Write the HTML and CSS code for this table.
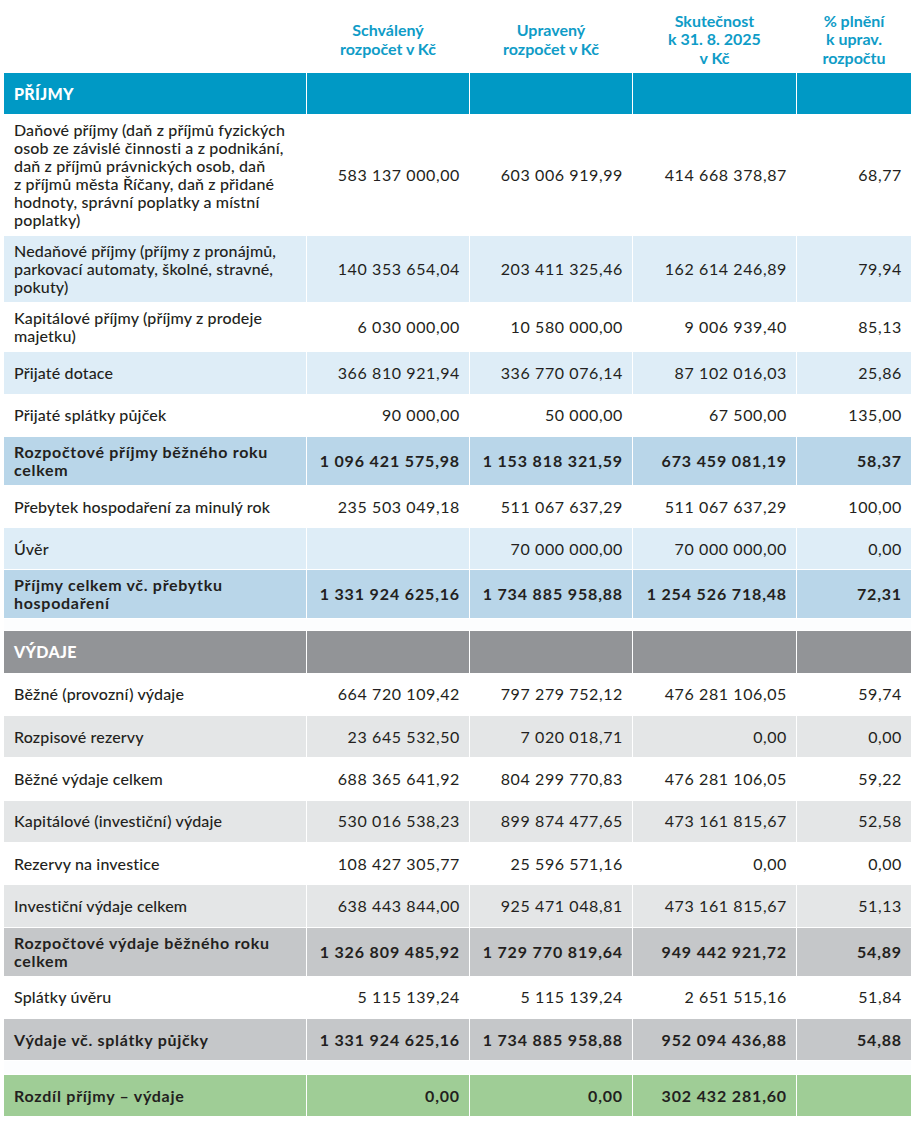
FILE: index.html
```html
<!DOCTYPE html>
<html lang="cs">
<head>
<meta charset="utf-8">
<title>Rozpočet</title>
<link rel="stylesheet" href="styles.css">
</head>
<body>
<table class="budget">
  <thead>
    <tr class="head">
      <th class="c-label"></th>
      <th class="c-num">Schválený<br>rozpočet v Kč</th>
      <th class="c-num">Upravený<br>rozpočet v Kč</th>
      <th class="c-num3">Skutečnost<br>k 31. 8. 2025<br>v Kč</th>
      <th class="c-pct">% plnění<br>k uprav.<br>rozpočtu</th>
    </tr>
  </thead>
  <tbody>
    <tr class="sec sec-in"><td>PŘÍJMY</td><td></td><td></td><td></td><td></td></tr>
    <tr class="w"><td>Daňové příjmy (daň z příjmů fyzických<br>osob ze závislé činnosti a z podnikání,<br>daň z příjmů právnických osob, daň<br>z příjmů města Říčany, daň z přidané<br>hodnoty, správní poplatky a místní<br>poplatky)</td><td>583 137 000,00</td><td>603 006 919,99</td><td>414 668 378,87</td><td>68,77</td></tr>
    <tr class="lb"><td>Nedaňové příjmy (příjmy z pronájmů,<br>parkovací automaty, školné, stravné,<br>pokuty)</td><td>140 353 654,04</td><td>203 411 325,46</td><td>162 614 246,89</td><td>79,94</td></tr>
    <tr class="w"><td>Kapitálové příjmy (příjmy z prodeje<br>majetku)</td><td>6 030 000,00</td><td>10 580 000,00</td><td>9 006 939,40</td><td>85,13</td></tr>
    <tr class="lb"><td>Přijaté dotace</td><td>366 810 921,94</td><td>336 770 076,14</td><td>87 102 016,03</td><td>25,86</td></tr>
    <tr class="w"><td>Přijaté splátky půjček</td><td>90 000,00</td><td>50 000,00</td><td>67 500,00</td><td>135,00</td></tr>
    <tr class="mb tot"><td>Rozpočtové příjmy běžného roku<br>celkem</td><td>1 096 421 575,98</td><td>1 153 818 321,59</td><td>673 459 081,19</td><td>58,37</td></tr>
    <tr class="w"><td>Přebytek hospodaření za minulý rok</td><td>235 503 049,18</td><td>511 067 637,29</td><td>511 067 637,29</td><td>100,00</td></tr>
    <tr class="lb"><td>Úvěr</td><td></td><td>70 000 000,00</td><td>70 000 000,00</td><td>0,00</td></tr>
    <tr class="mb tot"><td>Příjmy celkem vč. přebytku<br>hospodaření</td><td>1 331 924 625,16</td><td>1 734 885 958,88</td><td>1 254 526 718,48</td><td>72,31</td></tr>
    <tr class="gap"><td colspan="5"></td></tr>
    <tr class="sec sec-out"><td>VÝDAJE</td><td></td><td></td><td></td><td></td></tr>
    <tr class="w"><td>Běžné (provozní) výdaje</td><td>664 720 109,42</td><td>797 279 752,12</td><td>476 281 106,05</td><td>59,74</td></tr>
    <tr class="lg"><td>Rozpisové rezervy</td><td>23 645 532,50</td><td>7 020 018,71</td><td>0,00</td><td>0,00</td></tr>
    <tr class="w"><td>Běžné výdaje celkem</td><td>688 365 641,92</td><td>804 299 770,83</td><td>476 281 106,05</td><td>59,22</td></tr>
    <tr class="lg"><td>Kapitálové (investiční) výdaje</td><td>530 016 538,23</td><td>899 874 477,65</td><td>473 161 815,67</td><td>52,58</td></tr>
    <tr class="w"><td>Rezervy na investice</td><td>108 427 305,77</td><td>25 596 571,16</td><td>0,00</td><td>0,00</td></tr>
    <tr class="lg"><td>Investiční výdaje celkem</td><td>638 443 844,00</td><td>925 471 048,81</td><td>473 161 815,67</td><td>51,13</td></tr>
    <tr class="mg tot"><td>Rozpočtové výdaje běžného roku<br>celkem</td><td>1 326 809 485,92</td><td>1 729 770 819,64</td><td>949 442 921,72</td><td>54,89</td></tr>
    <tr class="w"><td>Splátky úvěru</td><td>5 115 139,24</td><td>5 115 139,24</td><td>2 651 515,16</td><td>51,84</td></tr>
    <tr class="mg tot"><td>Výdaje vč. splátky půjčky</td><td>1 331 924 625,16</td><td>1 734 885 958,88</td><td>952 094 436,88</td><td>54,88</td></tr>
    <tr class="gap gap2"><td colspan="5"></td></tr>
    <tr class="gr tot"><td>Rozdíl příjmy – výdaje</td><td>0,00</td><td>0,00</td><td>302 432 281,60</td><td></td></tr>
  </tbody>
</table>
</body>
</html>
```

FILE: styles.css
```css
html, body {
  margin: 0;
  padding: 0;
  background: #ffffff;
}

body {
  font-family: Lato, "Noto Sans", sans-serif;
  color: #231f20;
}

.budget {
  margin-left: 3px;
  width: 909px;
  table-layout: fixed;
  border-collapse: separate;
  border-spacing: 1px;
  background: #ffffff;
}

.budget th,
.budget td {
  box-sizing: border-box;
  padding: 6px 9px 6px 10px;
  font-size: 16px;
  line-height: 18px;
  vertical-align: middle;
}

.c-label { width: 302px; }
.c-num { width: 162px; }
.c-num3 { width: 163px; }
.c-pct { width: 114px; }

.budget .head th {
  height: 71px;
  padding: 6px 4px 0 4px;
  color: #0f9cc7;
  font-weight: 700;
  text-align: center;
  line-height: 18.5px;
}

.budget tbody td {
  height: 41.3px;
  text-align: right;
  font-weight: 400;
  letter-spacing: 0.6px;
}

.budget tbody td:first-child {
  text-align: left;
  font-weight: 500;
  letter-spacing: 0.15px;
}

.budget .sec td:first-child {
  color: #ffffff;
  font-weight: 900;
  letter-spacing: 0.3px;
}
.sec-in td { background: #0099c5; }
.sec-out td { background: #929497; }

.w td { background: #ffffff; }
.lb td { background: #deedf7; }
.mb td { background: #b9d6e9; }
.lg td { background: #e4e6e7; }
.mg td { background: #c5c7c9; }
.gr td { background: #9fcd96; }

.budget .tot td {
  font-weight: 700;
  letter-spacing: 0.85px;
}
.budget .tot td:first-child {
  font-weight: 700;
  letter-spacing: 0.7px;
}

.budget .gap td {
  height: 11px;
  padding: 0;
  background: #fcfdfe;
}
.budget .gap2 td {
  height: 13px;
}
```
